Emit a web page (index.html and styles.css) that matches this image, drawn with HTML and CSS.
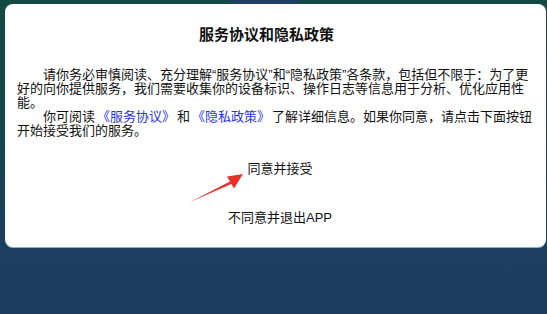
FILE: index.html
```html
<!DOCTYPE html>
<html lang="zh-CN">
<head>
<meta charset="utf-8">
<title>服务协议和隐私政策</title>
<link rel="stylesheet" href="styles.css">
</head>
<body>
<div class="screen">
  <span class="bg-blob"></span>
  <div class="dialog">
    <h1 class="title">服务协议和隐私政策</h1>
    <div class="content">
      <p class="para">请你务必审慎阅读、充分理解“服务协议”和“隐私政策”各条款，包括但不限于：为了更好的向你提供服务，我们需要收集你的设备标识、操作日志等信息用于分析、优化应用性能。</p>
      <p class="para">你可阅读<a class="link">《服务协议》</a>和<a class="link">《隐私政策》</a>了解详细信息。如果你同意，请点击下面按钮开始接受我们的服务。</p>
    </div>
    <div class="actions">
      <button class="btn btn-accept">同意并接受</button>
      <button class="btn btn-reject">不同意并退出APP</button>
    </div>
    <svg class="arrow" width="60" height="36" viewBox="0 0 60 36">
      <path d="M3 33 L44 12 L45.5 14.5 Z" fill="#e8302a"/>
      <path d="M56 5 L40 7.5 L47 19.5 Z" fill="#e8302a"/>
    </svg>
  </div>
</div>
</body>
</html>
```
FILE: styles.css
```css
* { box-sizing: border-box; }
html, body {
  margin: 0;
  padding: 0;
}
body {
  width: 547px;
  height: 314px;
  overflow: hidden;
  font-family: "Liberation Sans", "Noto Sans CJK SC", sans-serif;
  text-spacing-trim: space-all;
}
.screen {
  position: relative;
  width: 547px;
  height: 314px;
  padding: 4px 1px 0 5px;
  background: linear-gradient(180deg, #124a43 0%, #16464f 40%, #1b3f5e 75%, #1b3d60 100%);
}
.bg-blob {
  position: absolute;
  left: 230px;
  top: 0;
  width: 70px;
  height: 5px;
  background: #1d3f63;
  border-radius: 0 0 20px 20px;
}
.dialog {
  position: relative;
  height: 243px;
  background: #fff;
  border-radius: 8px;
  padding: 20px 8px 0 12px;
  box-shadow: 0 1px 0 #8fb0bf;
  display: flex;
  flex-direction: column;
}
.title {
  margin: 0;
  padding-right: 22px;
  font-family: "Noto Sans CJK SC", sans-serif;
  font-size: 15px;
  line-height: 20px;
  font-weight: 700;
  text-align: center;
  color: #111;
}
.content {
  margin-top: 24px;
  font-size: 13px;
  line-height: 14px;
  color: #111;
}
.para {
  margin: 0;
  text-indent: 2em;
}
.link {
  color: #2b35dc;
  text-decoration: none;
  margin: 0 2px;
}
.actions {
  margin-top: 24px;
  display: flex;
  flex-direction: column;
  align-items: center;
  gap: 35px;
}
.btn {
  border: 0;
  background: none;
  padding: 0;
  margin: 0;
  font-family: "Liberation Sans", "Noto Sans CJK SC", sans-serif;
  font-size: 13px;
  line-height: 14px;
  color: #111;
  padding-left: 5px;
}
.arrow {
  position: absolute;
  left: 182px;
  top: 165px;
}
```
